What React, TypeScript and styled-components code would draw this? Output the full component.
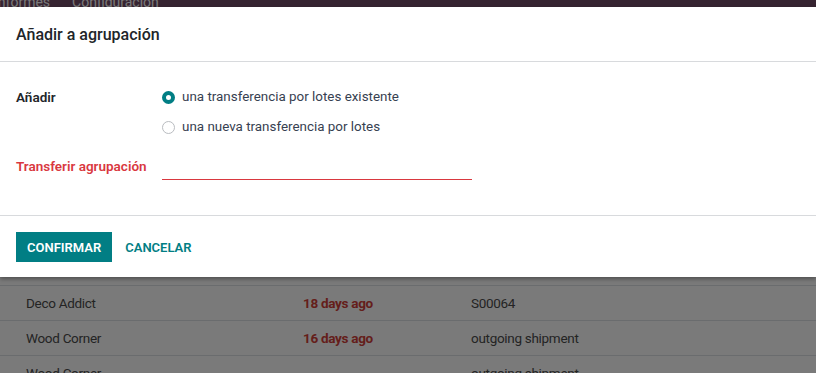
import styled, { createGlobalStyle } from "styled-components";

const GlobalStyle = createGlobalStyle`
  html, body {
    margin: 0;
    padding: 0;
    background: #ffffff;
  }
  body {
    font-family: Roboto, "Noto Sans", "Liberation Sans", sans-serif;
  }
`;

const Page = styled.div`
  position: relative;
  width: 816px;
  height: 373px;
  overflow: hidden;
  background: #ffffff;
`;

const NavBar = styled.div`
  display: flex;
  gap: 22px;
  height: 7px;
  overflow: hidden;
  background: #714b67;
`;

const NavItem = styled.span`
  display: block;
  margin-top: -8px;
  font-size: 14px;
  line-height: 20px;
  color: #ffffff;
  white-space: nowrap;

  &:first-child {
    margin-left: -6px;
  }
`;

const ListArea = styled.div`
  padding-top: 278px;
`;

const Row = styled.div`
  display: grid;
  grid-template-columns: 277px 168px 1fr;
  align-items: center;
  height: 34px;
  padding-left: 26px;
  border-top: 1px solid #dee2e6;
  font-size: 13.5px;
  letter-spacing: -0.3px;
  color: #4c4c4c;
`;

const Late = styled.span`
  color: #d23f3a;
  font-weight: 700;
`;

const Backdrop = styled.div`
  position: absolute;
  inset: 0;
  background: rgba(0, 0, 0, 0.52);
`;

const Dialog = styled.div`
  position: absolute;
  top: 7px;
  left: 0;
  right: 0;
  background: #ffffff;
  box-shadow: 0 2px 4px rgba(0, 0, 0, 0.35);
  color: #212529;
`;

const Header = styled.div`
  display: flex;
  align-items: center;
  height: 55px;
  padding: 0 16px;
  border-bottom: 1px solid #d8dadd;
  box-sizing: border-box;
`;

const Title = styled.h4`
  margin: 0;
  padding-top: 1px;
  font-size: 16px;
  font-weight: 500;
  color: #212529;
`;

const Body = styled.div`
  padding: 18px 16px 35px;
  border-bottom: 1px solid #d8dadd;
`;

const FieldRow = styled.div<{ $top?: number }>`
  display: grid;
  grid-template-columns: 146px 310px;
  align-items: start;
  margin-top: ${(p) => p.$top ?? 0}px;
`;

const Label = styled.label<{ $invalid?: boolean }>`
  font-size: 13.5px;
  font-weight: 600;
  line-height: 20px;
  padding-top: 7px;
  color: ${(p) => (p.$invalid ? "#d9383f" : "#212529")};
`;

const RadioList = styled.div`
  display: flex;
  flex-direction: column;
  gap: 10px;
  padding-top: 7px;
`;

const RadioOption = styled.div`
  display: flex;
  align-items: center;
  gap: 7px;
  font-size: 13.4px;
  line-height: 20px;
  color: #374151;
`;

const RadioDot = styled.span<{ $checked?: boolean }>`
  box-sizing: border-box;
  width: 13px;
  height: 13px;
  border-radius: 50%;
  background: #ffffff;
  border: ${(p) => (p.$checked ? "4px solid #017e84" : "1px solid #b9bcc0")};
`;

const Input = styled.div`
  box-sizing: border-box;
  height: 23px;
  margin-top: 8px;
  border-bottom: 1px solid #d9383f;
`;

const Footer = styled.div`
  display: flex;
  align-items: center;
  gap: 2px;
  padding: 16px 16px 15px;
`;

const Button = styled.button<{ $primary?: boolean }>`
  height: 30px;
  padding: 0 11px;
  border: none;
  border-radius: 0;
  font-family: inherit;
  font-size: 13px;
  font-weight: 600;
  text-transform: uppercase;
  cursor: pointer;
  background: ${(p) => (p.$primary ? "#017e84" : "transparent")};
  color: ${(p) => (p.$primary ? "#ffffff" : "#017e84")};
`;

const rows = [
  { partner: "Deco Addict", late: "18 days ago", origin: "S00064" },
  { partner: "Wood Corner", late: "16 days ago", origin: "outgoing shipment" },
  { partner: "Wood Corner", late: "", origin: "outgoing shipment" },
];

export default function App() {
  return (
    <Page>
      <GlobalStyle />
      <NavBar>
        <NavItem>Informes</NavItem>
        <NavItem>Configuración</NavItem>
      </NavBar>
      <ListArea>
        {rows.map((r, i) => (
          <Row key={i}>
            <span>{r.partner}</span>
            <Late>{r.late}</Late>
            <span>{r.origin}</span>
          </Row>
        ))}
      </ListArea>
      <Backdrop />
      <Dialog>
        <Header>
          <Title>Añadir a agrupación</Title>
        </Header>
        <Body>
          <FieldRow>
            <Label>Añadir</Label>
            <RadioList>
              <RadioOption>
                <RadioDot $checked />
                una transferencia por lotes existente
              </RadioOption>
              <RadioOption>
                <RadioDot />
                una nueva transferencia por lotes
              </RadioOption>
            </RadioList>
          </FieldRow>
          <FieldRow $top={12}>
            <Label $invalid>Transferir agrupación</Label>
            <Input />
          </FieldRow>
        </Body>
        <Footer>
          <Button $primary>Confirmar</Button>
          <Button>Cancelar</Button>
        </Footer>
      </Dialog>
    </Page>
  );
}
